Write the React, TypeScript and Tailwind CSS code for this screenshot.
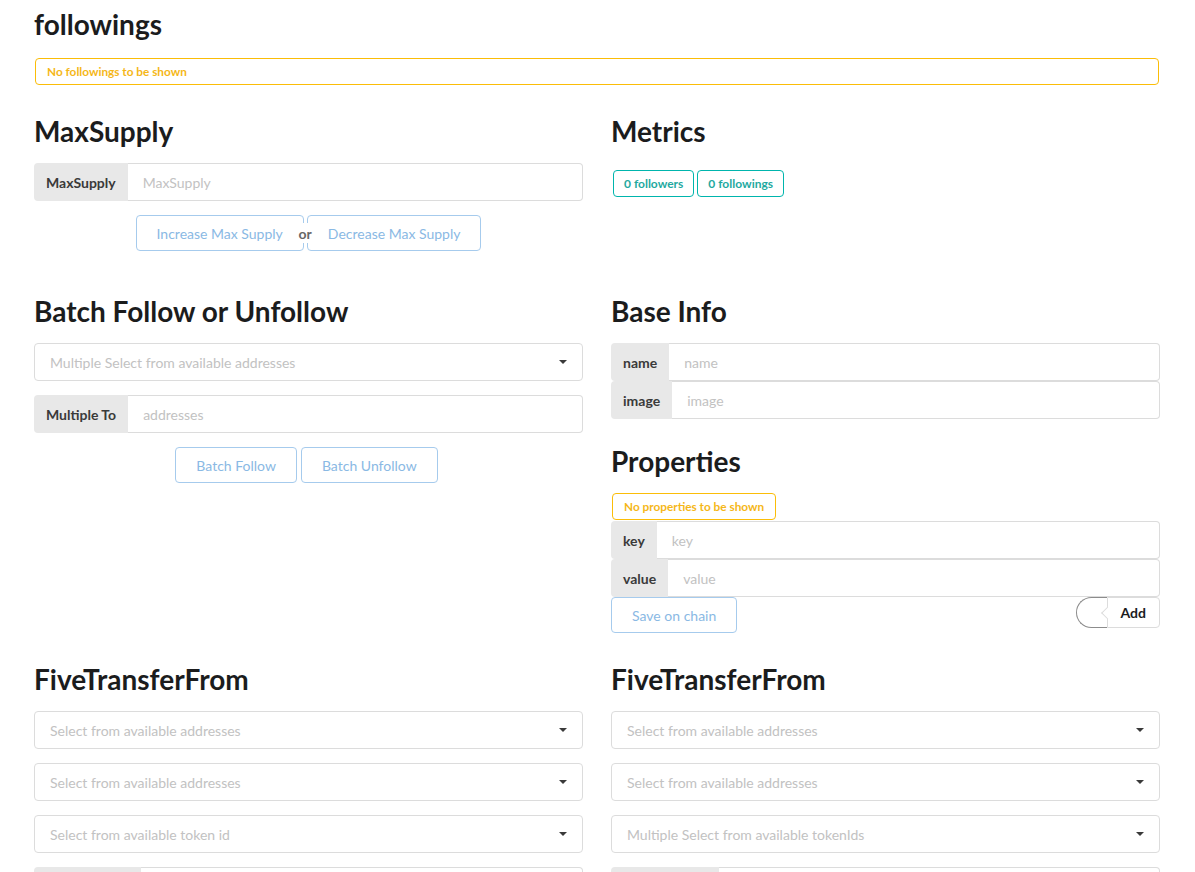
import type { ReactNode } from "react";

/* ── section title, Semantic-style h2 ── */
function Heading({ children, className = "" }: { children: ReactNode; className?: string }) {
  return (
    <h2 className={`text-[28px] font-bold leading-[36px] text-[#1b1c1d] ${className}`}>
      {children}
    </h2>
  );
}

/* ── labeled input: gray label left, input right ── */
function LabeledInput({
  label,
  placeholder,
  className = "",
  labelWidth,
}: {
  label: string;
  placeholder: string;
  className?: string;
  labelWidth?: string;
}) {
  return (
    <div className={`flex h-[38px] ${className}`}>
      <span
        className={`flex shrink-0 items-center rounded-l-[4px] bg-[#e8e8e8] px-[12px] text-[14px] font-bold text-[#3a3a3a] ${labelWidth ?? ""}`}
      >
        {label}
      </span>
      <input
        placeholder={placeholder}
        className="min-w-0 flex-1 rounded-r-[4px] border border-l-0 border-[#dcdcdc] bg-white px-[15px] text-[14px] text-[#333] outline-none placeholder:text-[#c2c2c2]"
      />
    </div>
  );
}

/* ── dropdown with default text and a caret ── */
function Dropdown({ text, className = "" }: { text: string; className?: string }) {
  return (
    <div
      className={`flex h-[38px] items-center justify-between rounded-[4px] border border-[#dcdcdc] bg-white pl-[15px] pr-[15px] text-[14px] text-[#c2c2c2] ${className}`}
    >
      <span>{text}</span>
      <svg width="8" height="4" viewBox="0 0 8 4">
        <path d="M0 0H8L4 4Z" fill="#3a3a3a" />
      </svg>
    </div>
  );
}

/* ── disabled basic blue button ── */
function BasicButton({ children, className = "" }: { children: ReactNode; className?: string }) {
  return (
    <button
      className={`h-[36px] rounded-[4px] border border-[#a6cbed] bg-white px-[20px] text-[14px] text-[#8ab9e4] ${className}`}
    >
      {children}
    </button>
  );
}

function Tag({ children }: { children: ReactNode }) {
  return (
    <span className="flex h-[27px] items-center rounded-[4px] border border-[#00b5ad] px-[10px] text-[12px] font-bold text-[#1fa99f]">
      {children}
    </span>
  );
}

export default function App() {
  return (
    <div
      className="min-h-screen bg-white pl-[34px] pr-[35px] pt-[6px] text-[14px] text-[#212121]"
      style={{ fontFamily: "Lato, 'Open Sans', sans-serif" }}
    >
      <h1 className="text-[28px] font-bold leading-[36px] text-[#1b1c1d]">followings</h1>
      <div className="ml-px mr-px mt-[16px] flex h-[27px] items-center rounded-[4px] border border-[#fbbd08] px-[11px] text-[11.8px] font-bold text-[#f5b718]">
        No followings to be shown
      </div>

      {/* row 1 */}
      <div className="mt-[28px] grid grid-cols-2 gap-x-[28px]">
        <div>
          <Heading>MaxSupply</Heading>
          <LabeledInput label="MaxSupply" placeholder="MaxSupply" className="mt-[14px]" />
          <div className="mt-[14px] flex justify-center">
            <div className="relative flex gap-[3px]">
              <BasicButton>Increase Max Supply</BasicButton>
              <BasicButton>Decrease Max Supply</BasicButton>
              <span className="absolute left-[162px] top-1/2 flex h-[20px] -translate-y-1/2 items-center bg-white px-[1px] text-[14px] font-bold text-[#666]">
                or
              </span>
            </div>
          </div>
        </div>
        <div>
          <Heading>Metrics</Heading>
          <div className="mt-[21px] flex gap-[3px] pl-[2px]">
            <Tag>0 followers</Tag>
            <Tag>0 followings</Tag>
          </div>
        </div>
      </div>

      {/* row 2 */}
      <div className="mt-[42px] grid grid-cols-2 gap-x-[28px]">
        <div>
          <Heading>Batch Follow or Unfollow</Heading>
          <Dropdown text="Multiple Select from available addresses" className="mt-[14px]" />
          <LabeledInput label="Multiple To" placeholder="addresses" className="mt-[14px]" />
          <div className="mt-[14px] flex justify-center gap-[4px] pr-[4px]">
            <BasicButton>Batch Follow</BasicButton>
            <BasicButton>Batch Unfollow</BasicButton>
          </div>
        </div>
        <div>
          <Heading>Base Info</Heading>
          <LabeledInput label="name" placeholder="name" className="mt-[14px]" />
          <LabeledInput label="image" placeholder="image" />
          <Heading className="mt-[24px]">Properties</Heading>
          <div className="mt-[14px] flex">
            <span className="ml-px flex h-[27px] items-center rounded-[4px] border border-[#fbbd08] px-[11px] text-[11.8px] font-bold text-[#f5b718]">
              No properties to be shown
            </span>
          </div>
          <LabeledInput label="key" placeholder="key" className="mt-px" />
          <LabeledInput label="value" placeholder="value" />
          <div className="flex items-start justify-between">
            <BasicButton className="px-[19px]">Save on chain</BasicButton>
            <div className="flex h-[31px]">
              <span className="w-[31px] rounded-l-[16px] border border-r-0 border-[#8c8c8c]" />
              <span className="relative flex items-center rounded-r-[4px] border border-[#dcdcdc] px-[13px] text-[14px] font-bold text-[#1b1c1d]">
                <span className="absolute left-[-5px] top-1/2 h-[9px] w-[9px] -translate-y-1/2 rotate-45 border-b border-l border-[#dcdcdc] bg-white" />
                Add
              </span>
            </div>
          </div>
        </div>
      </div>

      {/* row 3 */}
      <div className="mt-[28px] grid grid-cols-2 gap-x-[28px] pb-10">
        <div>
          <Heading>FiveTransferFrom</Heading>
          <Dropdown text="Select from available addresses" className="mt-[14px]" />
          <Dropdown text="Select from available addresses" className="mt-[14px]" />
          <Dropdown text="Select from available token id" className="mt-[14px]" />
          <LabeledInput label="" placeholder="" labelWidth="w-[107px]" className="mt-[14px]" />
        </div>
        <div>
          <Heading>FiveTransferFrom</Heading>
          <Dropdown text="Select from available addresses" className="mt-[14px]" />
          <Dropdown text="Select from available addresses" className="mt-[14px]" />
          <Dropdown text="Multiple Select from available tokenIds" className="mt-[14px]" />
          <LabeledInput label="" placeholder="" labelWidth="w-[108px]" className="mt-[14px]" />
        </div>
      </div>
    </div>
  );
}
